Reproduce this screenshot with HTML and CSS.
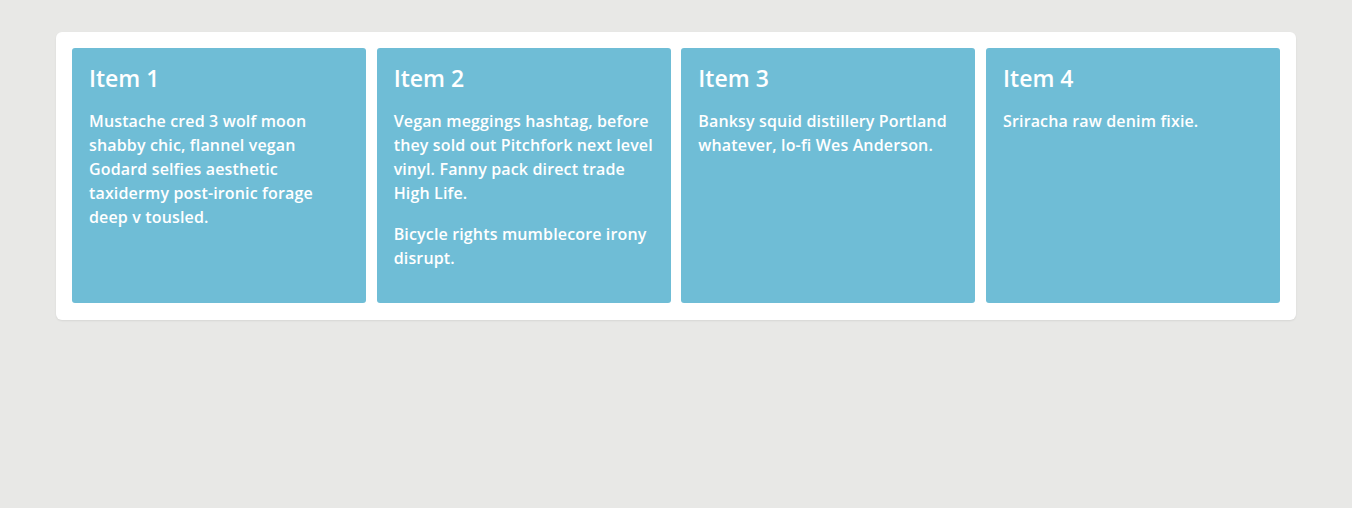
FILE: index.html
```html
<!DOCTYPE html>
<html>
<head>
<meta charset="utf-8">
<link rel="stylesheet" href="styles.css">
</head>
<body>
<div class="panel">
  <div class="card">
    <h2 class="title">Item 1</h2>
    <p class="text">Mustache cred 3 wolf moon shabby chic, flannel vegan Godard selfies aesthetic taxidermy post-ironic forage deep v tousled.</p>
  </div>
  <div class="card">
    <h2 class="title">Item 2</h2>
    <p class="text">Vegan meggings hashtag, before they sold out Pitchfork next level vinyl. Fanny pack direct trade High Life.</p>
    <p class="text">Bicycle rights mumblecore irony disrupt.</p>
  </div>
  <div class="card">
    <h2 class="title">Item 3</h2>
    <p class="text">Banksy squid distillery Portland whatever, lo-fi Wes Anderson.</p>
  </div>
  <div class="card">
    <h2 class="title">Item 4</h2>
    <p class="text">Sriracha raw denim fixie.</p>
  </div>
</div>
</body>
</html>
```
FILE: styles.css
```css
html, body {
  margin: 0;
  padding: 0;
}
body {
  background: #e8e8e6;
  font-family: "Open Sans", "Liberation Sans", sans-serif;
  padding: 32px 56px;
}
.panel {
  background: #fff;
  border-radius: 6px;
  box-shadow: 0 1px 2px rgba(0,0,0,0.08);
  padding: 16px 16px 17px;
  display: flex;
  gap: 10.67px;
}
.card {
  flex: 1 1 0;
  background: #6fbdd6;
  color: #fff;
  border-radius: 3px;
  padding: 16px 16px 16px 17px;
}
.title {
  margin: 0 0 17px;
  font-size: 23px;
  font-weight: 600;
  line-height: 28px;
}
.text {
  margin: 0 0 17px;
  font-size: 16px;
  font-weight: 600;
  line-height: 24px;
  letter-spacing: 0.15px;
}
```
